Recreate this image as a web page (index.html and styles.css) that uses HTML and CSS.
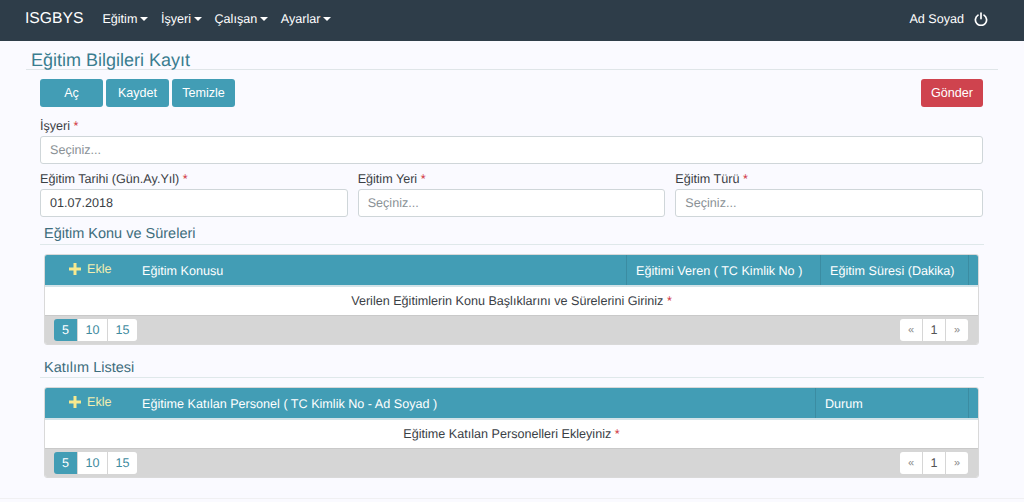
FILE: index.html
```html
<!DOCTYPE html>
<html lang="tr">
<head>
<meta charset="utf-8">
<title>Eğitim Bilgileri Kayıt</title>
<link rel="stylesheet" href="styles.css">
</head>
<body>
<nav class="navbar">
  <span class="brand">ISGBYS</span>
  <span class="nav-item caret">Eğitim</span>
  <span class="nav-item caret">İşyeri</span>
  <span class="nav-item caret">Çalışan</span>
  <span class="nav-item caret">Ayarlar</span>
  <span class="user">Ad Soyad</span>
  <svg class="power" width="14" height="14" viewBox="0 0 14 14" aria-hidden="true"><path d="M4 3.1a5.6 5.6 0 1 0 6 0" fill="none" stroke="#fff" stroke-width="1.7" stroke-linecap="round"/><path d="M7 1v5.6" fill="none" stroke="#fff" stroke-width="1.7" stroke-linecap="round"/></svg>
</nav>
<main class="page">
  <h1 class="title">Eğitim Bilgileri Kayıt</h1>
  <div class="form">
    <div class="actions">
      <button class="btn btn-info">Aç</button>
      <button class="btn btn-info">Kaydet</button>
      <button class="btn btn-info">Temizle</button>
      <button class="btn btn-danger">Gönder</button>
    </div>
    <label class="label label-first">İşyeri <span class="req">*</span></label>
    <div class="input placeholder">Seçiniz...</div>
    <div class="row">
      <div class="col">
        <label class="label">Eğitim Tarihi (Gün.Ay.Yıl) <span class="req">*</span></label>
        <div class="input">01.07.2018</div>
      </div>
      <div class="col">
        <label class="label">Eğitim Yeri <span class="req">*</span></label>
        <div class="input placeholder">Seçiniz...</div>
      </div>
      <div class="col">
        <label class="label">Eğitim Türü <span class="req">*</span></label>
        <div class="input placeholder">Seçiniz...</div>
      </div>
    </div>
  </div>
  <section class="section">
    <h2 class="subtitle">Eğitim Konu ve Süreleri</h2>
    <div class="table">
      <div class="thead">
        <div class="th th-add"><span class="add"><svg class="plus" width="12" height="12" viewBox="0 0 12 12" aria-hidden="true"><path d="M6 0v12M0 6h12" stroke="#f7e98e" stroke-width="3"/></svg>Ekle</span></div>
        <div class="th th-main">Eğitim Konusu</div>
        <div class="th th-teacher">Eğitimi Veren ( TC Kimlik No )</div>
        <div class="th th-time">Eğitim Süresi (Dakika)</div>
        <div class="th th-end"></div>
      </div>
      <div class="tbody">Verilen Eğitimlerin Konu Başlıklarını ve Sürelerini Giriniz <span class="req">*</span></div>
      <div class="tfoot">
        <div class="pager"><span class="page-btn active">5</span><span class="page-btn">10</span><span class="page-btn">15</span></div>
        <div class="pager"><span class="page-btn nav">«</span><span class="page-btn num">1</span><span class="page-btn nav">»</span></div>
      </div>
    </div>
  </section>
  <section class="section section-2">
    <h2 class="subtitle">Katılım Listesi</h2>
    <div class="table">
      <div class="thead">
        <div class="th th-add"><span class="add"><svg class="plus" width="12" height="12" viewBox="0 0 12 12" aria-hidden="true"><path d="M6 0v12M0 6h12" stroke="#f7e98e" stroke-width="3"/></svg>Ekle</span></div>
        <div class="th th-main">Eğitime Katılan Personel ( TC Kimlik No - Ad Soyad )</div>
        <div class="th th-status">Durum</div>
        <div class="th th-end"></div>
      </div>
      <div class="tbody">Eğitime Katılan Personelleri Ekleyiniz <span class="req">*</span></div>
      <div class="tfoot">
        <div class="pager"><span class="page-btn active">5</span><span class="page-btn">10</span><span class="page-btn">15</span></div>
        <div class="pager"><span class="page-btn nav">«</span><span class="page-btn num">1</span><span class="page-btn nav">»</span></div>
      </div>
    </div>
  </section>
</main>
<div class="footer-line"></div>
</body>
</html>
```
FILE: styles.css
```css
* { box-sizing: border-box; }
html, body { margin: 0; padding: 0; }
body {
  width: 1024px;
  height: 502px;
  overflow: hidden;
  background: #fafaff;
  color: #3a4045;
  font-family: "Liberation Sans", Arial, sans-serif;
  font-size: 12.6px;
  text-rendering: geometricPrecision;
}
.navbar {
  display: flex;
  align-items: center;
  height: 41px;
  padding: 0 36px 3px 25px;
  background: #2e3d49;
  color: #fff;
}
.brand { font-size: 15.7px; margin-right: 19px; }
.nav-item { margin-right: 12.5px; font-size: 12.6px; }
.caret::after {
  content: "";
  display: inline-block;
  margin-left: 3px;
  vertical-align: 2px;
  border-top: 4px solid #fff;
  border-left: 4px solid transparent;
  border-right: 4px solid transparent;
}
.user { margin-left: auto; margin-right: 10px; }
.power { display: block; }
.page { padding: 0 26px; width: 1024px; }
.title {
  margin: 0;
  height: 29px;
  padding: 9px 0 0 5px;
  border-bottom: 1px solid #dfe5e8;
  color: #3a7d8f;
  font-size: 18px;
  font-weight: 400;
  line-height: 20px;
}
.form { padding: 9px 15px 0 14px; }
.actions { display: flex; gap: 3px; }
.btn {
  width: 63px;
  height: 28px;
  padding: 0;
  border: 0;
  border-radius: 3px;
  color: #fff;
  font: inherit;
}
.btn-info { background: #429db5; }
.btn-danger { width: 62px; margin-left: auto; background: #cf434e; }
.label { display: block; height: 18px; line-height: 18px; font-size: 12.6px; }
.label-first { margin-top: 10px; height: 19px; }
.req { color: #d0333d; }
.input {
  height: 28px;
  padding: 0 9px;
  border: 1px solid #cfd6d9;
  border-radius: 3px;
  background: #fff;
  line-height: 26px;
  font-size: 12.6px;
}
.placeholder { color: #8a9196; }
.row { display: flex; gap: 10px; margin-top: 5px; }
.col { flex: 1; }
.col .label { height: 20px; line-height: 20px; }
.section { padding: 6px 14px 0 14px; }
.section-2 { padding-top: 11px; }
.subtitle {
  margin: 0 0 9px;
  height: 22px;
  padding-left: 4px;
  border-bottom: 1px solid #dfe8ea;
  color: #3e6d7c;
  font-size: 14.5px;
  font-weight: 400;
  line-height: 23px;
}
.section-2 .subtitle { padding-top: 1px; }
.table {
  width: 935px;
  margin-left: 4px;
  border: 1px solid #d9d9d9;
  border-radius: 3px;
  background: #fff;
  overflow: hidden;
}
.thead {
  display: flex;
  height: 32px;
  background: #429db5;
  border-bottom: 2px solid #d3e3e8;
  color: #fff;
  font-size: 12.6px;
}
.th {
  display: flex;
  align-items: center;
  padding-top: 2px;
  padding-left: 9px;
  border-right: 1px solid #3b8ca2;
}
.th-add { width: 88px; padding-top: 0; padding-left: 24px; border-right: 0; }
.th-main { flex: 1; }
.th-teacher { width: 194px; }
.th-time { width: 148px; }
.th-status { width: 153px; }
.th-end { width: 9px; padding: 0; border-right: 0; }
.add { display: flex; align-items: center; color: #f3eeb0; margin-top: -2px; }
.plus { margin-right: 6px; }
.tbody {
  height: 29px;
  line-height: 28px;
  text-align: center;
  font-size: 12.6px;
  border-bottom: 1px solid #c9c9c9;
}
.tfoot {
  display: flex;
  justify-content: space-between;
  align-items: center;
  height: 28px;
  padding: 0 10px 0 9px;
  background: #d6d6d6;
}
.pager { display: flex; gap: 1px; }
.page-btn {
  width: 29px;
  height: 22px;
  background: #fff;
  color: #3f8ba0;
  line-height: 22px;
  text-align: center;
  font-size: 12.6px;
}
.page-btn:first-child { border-radius: 3px 0 0 3px; }
.page-btn:last-child { border-radius: 0 3px 3px 0; }
.page-btn.active { width: 23px; background: #429db5; color: #fff; }
.page-btn.num { width: 22px; color: #555; }
.page-btn.nav { width: 22px; color: #888; font-size: 11px; }
.footer-line { height: 1px; margin-top: 20px; background: #f0f0f2; }
```
